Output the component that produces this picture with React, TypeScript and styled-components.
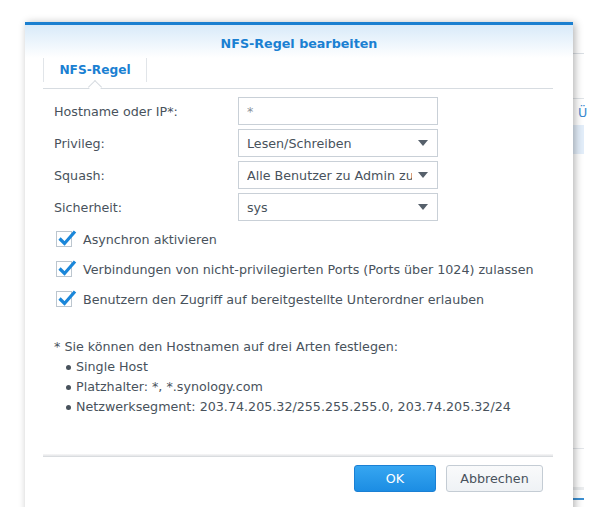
import React from "react";
import styled, { createGlobalStyle } from "styled-components";

const GlobalStyle = createGlobalStyle`
  html, body { margin: 0; padding: 0; background: #fff; }
  body { font-family: "DejaVu Sans", Verdana, sans-serif; font-size: 12.7px; color: #48525c; }
  * { box-sizing: border-box; }
`;

const Desktop = styled.div`
  position: relative;
  width: 612px;
  height: 507px;
  overflow: hidden;
  background: #fff;
`;

const BgWindow = styled.div`
  position: absolute;
  left: 200px;
  top: 0;
  width: 387px;
  height: 507px;
  overflow: hidden;
  display: flex;
  flex-direction: column;
  background: #fff;
`;

const BgHead = styled.div`
  height: 54px;
  margin-right: 3px;
  border-bottom: 1px solid #dadfe4;
`;

const BgToolbar = styled.div`
  height: 45px;
  margin-right: 3px;
  border-bottom: 1px solid #e0e4e8;
`;

const BgRow = styled.div<{ $selected?: boolean }>`
  height: ${(p) => (p.$selected ? 29 : 26)}px;
  margin-right: 3px;
  display: flex;
  align-items: center;
  padding-left: 378px;
  color: #3a8ad0;
  white-space: nowrap;
  background: ${(p) => (p.$selected ? "#e3eefa" : "transparent")};
`;

const BgFiller = styled.div`
  height: 295px;
  margin-right: 3px;
  border-bottom: 1px solid #e3e6ea;
`;

const BgFooter = styled.div`
  height: 41px;
  margin-right: 3px;
  border-bottom: 3px solid #ebedef;
`;

const BgBlueLine = styled.div`
  margin-top: 8px;
  margin-right: 3px;
  height: 2px;
  background: #3b8fd2;
`;

const Dialog = styled.div`
  position: absolute;
  left: 25px;
  top: 22px;
  width: 548px;
  height: 510px;
  background: #fff;
  border-top: 3px solid #1a7fd0;
  box-shadow: 2px 1px 8px rgba(0, 0, 0, 0.3);
  display: flex;
  flex-direction: column;
`;

const Header = styled.div`
  height: 33px;
  padding-top: 3px;
  display: flex;
  align-items: center;
  justify-content: center;
  background: linear-gradient(#d8eaf9, #ffffff);
`;

const Title = styled.div`
  font-weight: bold;
  color: #1a80d2;
`;

const TabBar = styled.div`
  margin: 0 20px 0 18px;
  height: 31px;
  border-bottom: 1px solid #d7dce1;
  display: flex;
  align-items: flex-start;
`;

const Tab = styled.div`
  position: relative;
  width: 104px;
  height: 24px;
  border-left: 1px solid #e1e5e9;
  border-right: 1px solid #e1e5e9;
  display: flex;
  align-items: center;
  justify-content: center;
  font-weight: bold;
  font-size: 12.2px;
  color: #1a80d2;

  &::after {
    content: "";
    position: absolute;
    left: 50%;
    bottom: -10px;
    width: 9px;
    height: 9px;
    margin-left: -5px;
    background: #fff;
    border-top: 1px solid #d7dce1;
    border-left: 1px solid #d7dce1;
    transform: rotate(45deg);
  }
`;

const Body = styled.div`
  padding: 8px 0 0 29px;
  display: flex;
  flex-direction: column;
`;

const FormGrid = styled.div`
  display: grid;
  grid-template-columns: 184px 200px;
  grid-auto-rows: 28px;
  row-gap: 4px;
`;

const Label = styled.div`
  display: flex;
  align-items: center;
  color: #48525c;
`;

const Field = styled.div<{ $placeholder?: boolean }>`
  border: 1px solid #c9d0d7;
  background: #fff;
  padding: 0 9px 0 8px;
  display: flex;
  align-items: center;
  justify-content: space-between;
  white-space: nowrap;
  overflow: hidden;
  color: ${(p) => (p.$placeholder ? "#8a939c" : "#48525c")};
`;

const FieldText = styled.span`
  overflow: hidden;
  flex: 1;
`;

const Caret = styled.span`
  flex: none;
  margin-left: 6px;
  width: 0;
  height: 0;
  border-left: 5px solid transparent;
  border-right: 5px solid transparent;
  border-top: 6px solid #56606b;
`;

const CheckList = styled.div`
  margin-top: 3px;
  padding-left: 2px;
  display: flex;
  flex-direction: column;
`;

const CheckRow = styled.div`
  height: 30px;
  display: flex;
  align-items: center;
  gap: 11px;
`;

const Box = styled.span`
  position: relative;
  width: 16px;
  height: 16px;
  border: 1px solid #bcc6cf;
  background: #fff;
  flex: none;

  svg {
    position: absolute;
    left: 0px;
    top: -4px;
  }
`;

const Info = styled.div`
  margin-top: 23px;
  line-height: 20px;
`;

const Bullets = styled.ul`
  list-style: none;
  margin: 0;
  padding: 0 0 0 12px;
`;

const Bullet = styled.li`
  display: flex;
  align-items: center;
  gap: 5px;

  &::before {
    content: "";
    width: 5px;
    height: 5px;
    border-radius: 50%;
    background: #48525c;
  }
`;

const Separator = styled.div`
  margin: 37px 20px 0 18px;
  height: 3px;
  background: linear-gradient(#f7f7f7, #e4e6e8);
  border-bottom: 1px solid #d9dcdf;
`;

const Footer = styled.div`
  padding: 8px 30px 0 0;
  display: flex;
  justify-content: flex-end;
  gap: 10px;
`;

const Button = styled.button<{ $primary?: boolean; $w: number }>`
  width: ${(p) => p.$w}px;
  height: 27px;
  border-radius: 3px;
  font-family: inherit;
  font-size: 12.7px;
  cursor: pointer;
  border: 1px solid ${(p) => (p.$primary ? "#1a80d4" : "#c4ccd4")};
  background: ${(p) =>
    p.$primary ? "linear-gradient(#36a6f1, #1c8de3)" : "linear-gradient(#f9fafb, #eff2f5)"};
  color: ${(p) => (p.$primary ? "#fff" : "#48525c")};
`;

const Check = () => (
  <svg width="20" height="20" viewBox="0 0 20 20">
    <path d="M2.5 10.5 L7.5 15.5 L18 3.5" fill="none" stroke="#1a86d9" strokeWidth="3.2" strokeLinejoin="miter" />
  </svg>
);

const fields: { label: string; value: string; select?: boolean; placeholder?: boolean }[] = [
  { label: "Hostname oder IP*:", value: "*", placeholder: true },
  { label: "Privileg:", value: "Lesen/Schreiben", select: true },
  { label: "Squash:", value: "Alle Benutzer zu Admin zuordnen", select: true },
  { label: "Sicherheit:", value: "sys", select: true },
];

const checks = [
  "Asynchron aktivieren",
  "Verbindungen von nicht-privilegierten Ports (Ports über 1024) zulassen",
  "Benutzern den Zugriff auf bereitgestellte Unterordner erlauben",
];

export default function App() {
  return (
    <>
      <GlobalStyle />
      <Desktop>
        <BgWindow>
          <BgHead />
          <BgToolbar />
          <BgRow>Ü</BgRow>
          <BgRow $selected />
          <BgFiller />
          <BgFooter />
          <BgBlueLine />
        </BgWindow>
        <Dialog>
          <Header>
            <Title>NFS-Regel bearbeiten</Title>
          </Header>
          <TabBar>
            <Tab>NFS-Regel</Tab>
          </TabBar>
          <Body>
            <FormGrid>
              {fields.map((f) => (
                <React.Fragment key={f.label}>
                  <Label>{f.label}</Label>
                  <Field $placeholder={f.placeholder}>
                    <FieldText>{f.value}</FieldText>
                    {f.select && <Caret />}
                  </Field>
                </React.Fragment>
              ))}
            </FormGrid>
            <CheckList>
              {checks.map((c) => (
                <CheckRow key={c}>
                  <Box>
                    <Check />
                  </Box>
                  <span>{c}</span>
                </CheckRow>
              ))}
            </CheckList>
            <Info>
              <div>* Sie können den Hostnamen auf drei Arten festlegen:</div>
              <Bullets>
                <Bullet>Single Host</Bullet>
                <Bullet>Platzhalter: *, *.synology.com</Bullet>
                <Bullet>Netzwerksegment: 203.74.205.32/255.255.255.0, 203.74.205.32/24</Bullet>
              </Bullets>
            </Info>
          </Body>
          <Separator />
          <Footer>
            <Button $primary $w={82}>OK</Button>
            <Button $w={97}>Abbrechen</Button>
          </Footer>
        </Dialog>
      </Desktop>
    </>
  );
}
